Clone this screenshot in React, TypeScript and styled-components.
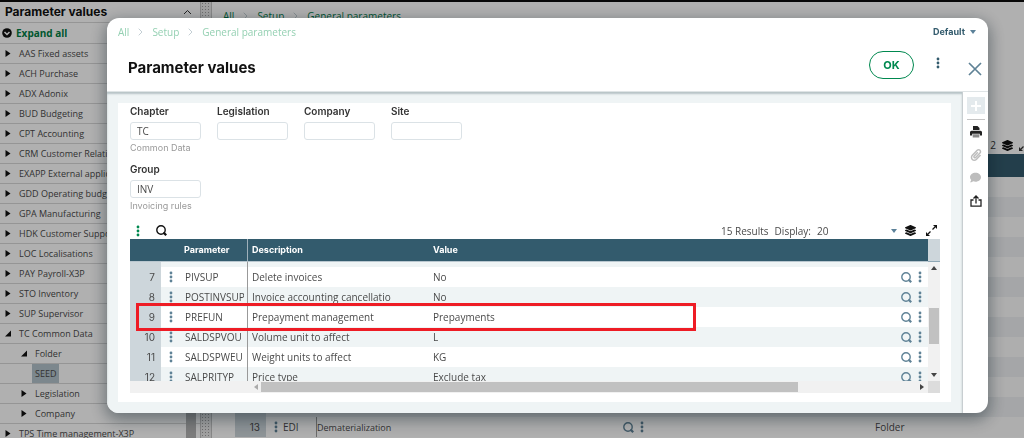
import React from "react";
import styled, { createGlobalStyle } from "styled-components";
import { FaLayerGroup, FaPrint, FaPaperclip, FaComment } from "react-icons/fa";

const ink = "#4a4a4a";
const slate = "#335b6d";
const body = `"Open Sans", "Noto Sans", sans-serif`;
const brand = `Inter, "Open Sans", sans-serif`;

const Global = createGlobalStyle`
  * { box-sizing: border-box; }
  body { margin: 0; overflow: hidden; font-family: ${body}; font-size: 10px; color: ${ink}; background: #fff; }
  button, input, select { font: inherit; color: inherit; margin: 0; padding: 0; border: 0; background: none; }
  button, select { cursor: pointer; }
  a { color: inherit; text-decoration: none; }
  h1, h2 { margin: 0; }
  svg { display: block; flex: none; }
`;

const Page = styled.div`
  display: flex;
  height: 100vh;
  border-top: 2px solid #0c0c0c;
  overflow: hidden;
`;

/* ---------- navigation tree ---------- */
const Sidebar = styled.aside`
  flex: none;
  width: 200px;
  overflow: hidden;
  font-size: 9px;
`;
const SideHeader = styled.div`
  display: flex;
  align-items: center;
  justify-content: space-between;
  height: 21px;
  padding: 0 8px 0 5px;
  border-bottom: 1px solid #d8d8d8;
`;
const SideTitle = styled.h2`
  font: 700 12px/20px ${brand};
  color: #111;
`;
const ExpandAll = styled.button`
  && {
    display: flex;
    align-items: center;
    gap: 4px;
    width: 100%;
    height: 21px;
    padding-left: 2px;
    border-bottom: 1px solid #d8d8d8;
    font-weight: 700;
    font-size: 10px;
    color: #007e45;
  }
`;
const TreeRow = styled.button<{ $depth: number }>`
  display: flex;
  align-items: center;
  gap: 8px;
  width: 100%;
  height: 20px;
  padding-left: ${(p) => 5 + p.$depth * 16}px;
  border-bottom: 1px solid #d8d8d8;
  line-height: 19px;
  white-space: nowrap;
`;
const Selected = styled.span`
  margin-left: -3px;
  padding: 0 3px;
  background: #b4c4cc;
`;
const SideScroll = styled.div`
  position: absolute;
  left: 186px;
  top: 24px;
  bottom: 0;
  width: 10px;
  background: #b4b4b4;
`;
const Splitter = styled.div`
  flex: none;
  width: 12px;
  border: solid #c4c4c4;
  border-width: 0 1px;
  background: radial-gradient(circle, #a0a0a0 1px, #eaeaea 1px) 0 0 / 3px 3px;
`;

/* ---------- page behind the dialog ---------- */
const Main = styled.main`
  flex: 1;
  min-width: 0;
`;
const Crumbs = styled.nav<{ $pale?: boolean }>`
  display: flex;
  align-items: center;
  gap: 9px;
  line-height: 16px;
  color: ${(p) => (p.$pale ? "#94d0b2" : "#00794a")};
`;
const MainTop = styled.div`
  height: 134px;
  padding: 6px 11px;
`;
const MainTools = styled.div`
  display: flex;
  align-items: center;
  justify-content: flex-end;
  gap: 6px;
  width: calc(100% + 6px);
  height: 18px;
  color: #333;
`;
const TableHolder = styled.div`
  padding-left: 23px;
`;
const Table = styled.table`
  width: 100%;
  table-layout: fixed;
  border-collapse: separate;
  border-spacing: 0;
  th, td { padding: 0; text-align: left; overflow: hidden; white-space: nowrap; }
`;
const BackHead = styled.th`
  height: 23px;
  background: ${slate};
`;
const BackRow = styled.tr<{ $alt: boolean }>`
  height: 20px;
  background: ${(p) => (p.$alt ? "#eff1f3" : "#fdfdfd")};
`;
const NoteCell = styled.td`
  font-size: 9px;
`;

/* ---------- dialog ---------- */
const Backdrop = styled.div`
  position: fixed;
  inset: 0;
  display: flex;
  padding: 18px 36px 25px 107px;
  background: rgba(0, 0, 0, 0.31);
`;
const Dialog = styled.section`
  display: flex;
  flex-direction: column;
  flex: 1;
  min-width: 0;
  overflow: hidden;
  border-radius: 12px;
  background: #fff;
  box-shadow: 0 5px 16px 2px rgba(0, 20, 30, 0.4);
`;
const DialogHeader = styled.header`
  display: flex;
  height: 74px;
  flex: none;
  border-bottom: 1px solid #dfe4e6;
`;
const HeaderLeft = styled.div`
  flex: 1;
  padding: 6px 0 0 11px;
`;
const DialogTitle = styled.h1`
  padding: 16px 0 0 10px;
  font: 700 15px/24px ${brand};
  color: #111;
`;
const HeaderRight = styled.div`
  display: flex;
  flex-direction: column;
  align-items: flex-end;
  padding: 6px 6px 0 0;
`;
const Picker = styled.span`
  display: flex;
  align-items: center;
  justify-content: space-between;
  position: relative;
`;
const ViewSelect = styled.select`
  appearance: none;
  width: 43px;
  height: 16px;
  margin-right: 6px;
  && { font: 700 9px/16px ${brand}; color: ${slate}; }
`;
const PickerArrow = styled.svg`
  position: absolute;
  right: 6px;
  width: 6px;
  height: 4px;
  fill: #5b8199;
  pointer-events: none;
`;
const Actions = styled.div`
  display: flex;
  align-items: flex-start;
  padding-top: 11px;
  color: ${slate};
`;
const OkButton = styled.button`
  && {
    width: 45px;
    height: 28px;
    border: 1px solid #00884f;
    border-radius: 14px;
    font: 700 11px/16px ${brand};
    color: #00884f;
  }
`;
const MenuButton = styled.button`
  && { display: flex; padding: 6px 22px; }
`;
const CloseButton = styled.button`
  && { display: flex; margin: 11px 0 0 6px; color: #5f8296; }
`;
const DialogBody = styled.div`
  display: flex;
  flex: 1;
  min-height: 0;
`;
const Canvas = styled.div`
  display: flex;
  flex: 1;
  min-width: 0;
  padding: 11px;
  background: #eff4f5;
  box-shadow: inset 0 2px 2px #b7c3c6;
`;
const Card = styled.div`
  display: flex;
  flex-direction: column;
  flex: 1;
  min-width: 0;
  padding: 1px 11px 9px 12px;
  background: #fff;
`;
const Rail = styled.div`
  display: flex;
  flex-direction: column;
  align-items: center;
  flex: none;
  width: 26px;
  padding-top: 5px;
  border-left: 1px solid #c8ced1;
  color: #222;
`;
const RailButton = styled.button<{ $off?: boolean }>`
  && {
    display: flex;
    align-items: center;
    justify-content: center;
    width: 18px;
    height: 23px;
    color: ${(p) => (p.$off ? "#bdbdbd" : "#222")};
  }
`;
const AddButton = styled.button`
  && {
    display: flex;
    align-items: center;
    justify-content: center;
    width: 18px;
    height: 17px;
    background: #e4eaed;
    color: #fff;
  }
`;
const RailRule = styled.div`
  width: 18px;
  height: 1px;
  margin: 5px 0 0;
  background: #c4c4c4;
`;

/* ---------- form ---------- */
const Fields = styled.div`
  display: flex;
  gap: 16px;
  flex: none;
  height: 58px;
`;
const Field = styled.div`
  width: 71px;
`;
const Label = styled.label`
  display: block;
  margin-bottom: 3px;
  font: 600 10px/15px ${brand};
  color: #333;
`;
const TextBox = styled.input`
  && {
    display: block;
    width: 71px;
    height: 18px;
    padding: 0 6px;
    border: 1px solid #dbe2e6;
    border-radius: 3px;
  }
`;
const Hint = styled.div`
  font: 400 9px/16px ${brand};
  color: #999;
  white-space: nowrap;
`;

/* ---------- grid ---------- */
const GridTools = styled.div`
  display: flex;
  align-items: center;
  flex: none;
  height: 17px;
  margin-top: 2px;
  color: #111;
`;
const GridMenu = styled.button`
  && { display: flex; width: 26px; padding-left: 6px; color: #00884f; }
`;
const Tool = styled.button`
  display: flex;
`;
const Paging = styled.label`
  display: flex;
  align-items: center;
  gap: 6px;
  margin-left: auto;
  color: ${ink};
`;
const SizeSelect = styled.select`
  appearance: none;
  width: 86px;
  height: 17px;
`;
const GridIcons = styled.div`
  display: flex;
  align-items: center;
  gap: 10px;
  padding: 0 3px 0 2px;
`;
const Grid = styled.div`
  position: relative;
  display: grid;
  grid-template-columns: minmax(0, 1fr) 12px;
  grid-template-rows: minmax(0, 1fr) 12px;
  flex: 1;
  min-height: 0;
`;
const Viewport = styled.div`
  overflow: hidden;
`;
const HeadCell = styled.th<{ $line?: boolean }>`
  && { padding-left: ${(p) => (p.$line ? 0 : 4)}px; }
  height: 23px;
  border-bottom: 1px solid #b9c7cf;
  ${(p) => p.$line && "border-right: 1px solid #9fb0ba;"}
  background: ${slate};
  font: 700 9px/16px ${brand};
  color: #fff;
`;
const Row = styled.tr<{ $alt?: boolean; $short?: boolean }>`
  height: ${(p) => (p.$short ? 5 : 20)}px;
  line-height: 20px;
  background: ${(p) => (p.$alt ? "#eff4f5" : "#fff")};
`;
const IndexCell = styled.td`
  && { padding-right: 6px; text-align: right; }
  background: #cdd6db;
  font-family: ${brand};
`;
const DotsCell = styled.td`
  && { padding-left: 8px; color: #5f8296; }
`;
const CodeCell = styled.td`
  && { padding-left: 1px; }
  border-right: 1px solid #999;
`;
const Clip = styled.div`
  width: 59px;
  overflow: hidden;
`;
const TextCell = styled.td`
  && { padding-left: 4px; }
`;
const RowIcons = styled.div`
  display: flex;
  align-items: center;
  gap: 6px;
  color: #5f8296;
`;
const VBar = styled.div`
  display: flex;
  flex-direction: column;
  align-items: center;
  background: #f1f1f1;
`;
const VHead = styled.div`
  flex: none;
  width: 100%;
  height: 23px;
  background: #cdd6db;
  border-bottom: 1px solid #8fa8b5;
`;
const Thumb = styled.div<{ $across?: boolean }>`
  background: #c1c1c1;
  ${(p) => (p.$across ? "flex: 540; height: 10px;" : "width: 10px; height: 36px; margin: 30px 0 auto;")}
`;
const HBar = styled.div`
  display: flex;
  align-items: center;
  padding-right: 4px;
  background: #f1f1f1;
`;
const HLead = styled.div`
  flex: none;
  width: 131px;
  padding-left: 124px;
`;
const HRest = styled.div`
  display: flex;
  flex: 127;
  justify-content: flex-end;
`;
const Corner = styled.div`
  background: #dcdcdc;
`;
const Highlight = styled.div`
  position: absolute;
  left: 6px;
  right: 244px;
  top: 64px;
  height: 28px;
  border: 3px solid #ee1c25;
  pointer-events: none;
`;

/* ---------- drawings ---------- */
const Dots = () => (
  <svg width="4" height="12" viewBox="0 0 4 12" fill="currentColor">
    <circle cx="2" cy="2" r="1.4" />
    <circle cx="2" cy="6" r="1.4" />
    <circle cx="2" cy="10" r="1.4" />
  </svg>
);
const Search = () => (
  <svg width="11" height="11" viewBox="0 0 11 11" fill="none" stroke="currentColor">
    <circle cx="5" cy="5" r="4.2" strokeWidth="1.4" />
    <path d="M7.4 7.400 10.2 10.2" strokeWidth="2.2" />
  </svg>
);
const Chevron = () => (
  <svg width="5" height="8" viewBox="0 0 5 8" fill="none" stroke="#c4cfd4">
    <path d="M.7.7 4 4 .7 7.3" />
  </svg>
);
const Expand = () => (
  <svg width="11" height="11" viewBox="0 0 11 11" fill="currentColor" stroke="currentColor">
    <path d="M6.5 4.5 9 2M4.5 6.5 2 9" strokeWidth="1.3" />
    <path d="M7 0H11V4ZM0 7V11H4Z" stroke="none" />
  </svg>
);
const Tri = ({ open }: { open?: boolean }) => (
  <svg width="6" height="7" viewBox="0 0 6 7" fill="#111">
    <path d={open ? "M6 0.500V6.500H0Z" : "M0.500 0 5.500 3.500 0.500 7Z"} />
  </svg>
);

const tree: { name: string; depth?: number; open?: boolean; picked?: boolean }[] = [
  { name: "AAS Fixed assets" },
  { name: "ACH Purchase" },
  { name: "ADX Adonix" },
  { name: "BUD Budgeting" },
  { name: "CPT Accounting" },
  { name: "CRM Customer Relation" },
  { name: "EXAPP External applic" },
  { name: "GDD Operating budge" },
  { name: "GPA Manufacturing" },
  { name: "HDK Customer Suppo" },
  { name: "LOC Localisations" },
  { name: "PAY Payroll-X3P" },
  { name: "STO Inventory" },
  { name: "SUP Supervisor" },
  { name: "TC Common Data", open: true },
  { name: "Folder", depth: 1, open: true },
  { name: "SEED", depth: 1, picked: true },
  { name: "Legislation", depth: 1 },
  { name: "Company", depth: 1 },
  { name: "TPS Time management-X3P" },
];

const rows = [
  [7, "PIVSUP", "Delete invoices", "No"],
  [8, "POSTINVSUP", "Invoice accounting cancellatio", "No"],
  [9, "PREFUN", "Prepayment management", "Prepayments"],
  [10, "SALDSPVOU", "Volume unit to affect", "L"],
  [11, "SALDSPWEU", "Weight units to affect", "KG"],
  [12, "SALPRITYP", "Price type", "Exclude tax"],
] as const;

const CrumbTrail = ({ pale }: { pale?: boolean }) => (
  <Crumbs $pale={pale} aria-label="Breadcrumb">
    <a href="#all">All</a>
    <Chevron />
    <a href="#setup">Setup</a>
    <Chevron />
    <a href="#general">General parameters</a>
  </Crumbs>
);

const FormField = ({ id, label, value = "", hint }: { id: string; label: string; value?: string; hint?: string }) => (
  <Field>
    <Label htmlFor={id}>{label}</Label>
    <TextBox id={id} defaultValue={value} />
    {hint && <Hint>{hint}</Hint>}
  </Field>
);

export default function App() {
  return (
    <>
      <Global />
      <Page>
        <Sidebar>
          <SideHeader>
            <SideTitle>Parameter values</SideTitle>
            <svg width="9" height="6" viewBox="0 0 9 6" fill="none" stroke="#333">
              <path d="M1 5 4.500 1.500 8 5" />
            </svg>
          </SideHeader>
          <ExpandAll>
            <svg width="10" height="10" viewBox="0 0 10 10">
              <circle cx="5" cy="5" r="4.800" fill="#111" />
              <path d="M2.500 4 5 6.500 7.500 4" fill="none" stroke="#fff" strokeWidth="1.500" />
            </svg>
            Expand all
          </ExpandAll>
          {tree.map((n) => (
            <TreeRow key={n.name} $depth={n.depth ?? 0}>
              {n.picked ? (
                <>
                  <svg width="6" height="8" />
                  <Selected>{n.name}</Selected>
                </>
              ) : (
                <>
                  <Tri open={n.open} />
                  {n.name}
                </>
              )}
            </TreeRow>
          ))}
          <SideScroll />
        </Sidebar>
        <Splitter />
        <Main>
          <MainTop>
            <CrumbTrail />
          </MainTop>
          <MainTools>
            2 <FaLayerGroup size={11} color="#111" /> <Expand />
          </MainTools>
          <TableHolder>
            <Table>
              <colgroup>
                <col style={{ width: 31 }} />
                <col style={{ width: 16 }} />
                <col style={{ width: 35 }} />
                <col style={{ width: 306 }} />
                <col style={{ width: 252 }} />
                <col />
              </colgroup>
              <thead>
                <tr>
                  <BackHead colSpan={6} />
                </tr>
              </thead>
              <tbody>
                {Array.from({ length: 12 }, (_, i) => (
                  <BackRow key={i} $alt={i % 2 === 1}>
                    <IndexCell />
                    <td colSpan={5} />
                  </BackRow>
                ))}
                <BackRow $alt={false}>
                  <IndexCell>13</IndexCell>
                  <DotsCell>
                    <Dots />
                  </DotsCell>
                  <CodeCell>EDI</CodeCell>
                  <NoteCell>Dematerialization</NoteCell>
                  <td>
                    <RowIcons>
                      <Search />
                      <Dots />
                    </RowIcons>
                  </td>
                  <td>Folder</td>
                </BackRow>
              </tbody>
            </Table>
          </TableHolder>
        </Main>
      </Page>

      <Backdrop>
        <Dialog role="dialog" aria-label="Parameter values">
          <DialogHeader>
            <HeaderLeft>
              <CrumbTrail pale />
              <DialogTitle>Parameter values</DialogTitle>
            </HeaderLeft>
            <HeaderRight>
              <Picker>
                <ViewSelect aria-label="View">
                  <option>Default</option>
                </ViewSelect>
                <PickerArrow viewBox="0 0 6 4">
                  <path d="M0 0H6L3 4Z" />
                </PickerArrow>
              </Picker>
              <Actions>
                <OkButton>OK</OkButton>
                <MenuButton aria-label="More actions">
                  <Dots />
                </MenuButton>
                <CloseButton aria-label="Close">
                  <svg width="14" height="14" viewBox="0 0 14 14" stroke="currentColor" strokeWidth="1.700">
                    <path d="M1 1 13 13M13 1 1 13" />
                  </svg>
                </CloseButton>
              </Actions>
            </HeaderRight>
          </DialogHeader>
          <DialogBody>
            <Canvas>
              <Card>
                <Fields>
                  <FormField id="chapter" label="Chapter" value="TC" hint="Common Data" />
                  <FormField id="legislation" label="Legislation" />
                  <FormField id="company" label="Company" />
                  <FormField id="site" label="Site" />
                </Fields>
                <Fields>
                  <FormField id="group" label="Group" value="INV" hint="Invoicing rules" />
                </Fields>
                <GridTools>
                  <GridMenu aria-label="Grid menu">
                    <Dots />
                  </GridMenu>
                  <Tool aria-label="Search">
                    <Search />
                  </Tool>
                  <Paging>
                    <span>15 Results</span>
                    <span>Display:</span>
                    <Picker>
                      <SizeSelect>
                        <option>20</option>
                      </SizeSelect>
                      <PickerArrow viewBox="0 0 6 4">
                        <path d="M0 0H6L3 4Z" />
                      </PickerArrow>
                    </Picker>
                  </Paging>
                  <GridIcons>
                    <Tool aria-label="Layers">
                      <FaLayerGroup size={11} />
                    </Tool>
                    <Tool aria-label="Full screen">
                      <Expand />
                    </Tool>
                  </GridIcons>
                </GridTools>
                <Grid>
                  <Viewport>
                    <Table>
                      <colgroup>
                        <col style={{ width: 31 }} />
                        <col style={{ width: 23 }} />
                        <col style={{ width: 64 }} />
                        <col style={{ width: 181 }} />
                        <col />
                        <col style={{ width: 27 }} />
                      </colgroup>
                      <thead>
                        <tr>
                          <HeadCell />
                          <HeadCell />
                          <HeadCell $line>Parameter</HeadCell>
                          <HeadCell>Description</HeadCell>
                          <HeadCell>Value</HeadCell>
                          <HeadCell />
                        </tr>
                      </thead>
                      <tbody>
                        <Row $short $alt>
                          <IndexCell />
                          <td />
                          <CodeCell />
                          <td colSpan={3} />
                        </Row>
                        {rows.map(([no, code, text, value], i) => (
                          <Row key={no} $alt={i % 2 === 1}>
                            <IndexCell>{no}</IndexCell>
                            <DotsCell>
                              <Dots />
                            </DotsCell>
                            <CodeCell>
                              <Clip>{code}</Clip>
                            </CodeCell>
                            <TextCell>{text}</TextCell>
                            <TextCell>{value}</TextCell>
                            <td>
                              <RowIcons>
                                <Search />
                                <Dots />
                              </RowIcons>
                            </td>
                          </Row>
                        ))}
                      </tbody>
                    </Table>
                  </Viewport>
                  <VBar>
                    <VHead />
                    <svg width="6" height="16" viewBox="0 0 6 16" fill="#444">
                      <path d="M0 8 3 4 6 8Z" />
                    </svg>
                    <Thumb />
                    <svg width="6" height="10" viewBox="0 0 6 10" fill="#444">
                      <path d="M0 2H6L3 6Z" />
                    </svg>
                  </VBar>
                  <HBar>
                    <HLead>
                      <svg width="4" height="6" viewBox="0 0 4 6" fill="#aaa">
                        <path d="M4 0V6L0 3Z" />
                      </svg>
                    </HLead>
                    <Thumb $across />
                    <HRest>
                      <svg width="4" height="6" viewBox="0 0 4 6" fill="#444">
                        <path d="M0 0V6L4 3Z" />
                      </svg>
                    </HRest>
                  </HBar>
                  <Corner />
                  <Highlight />
                </Grid>
              </Card>
            </Canvas>
            <Rail>
              <AddButton aria-label="Add">
                <svg width="12" height="12" viewBox="0 0 12 12" stroke="currentColor" strokeWidth="2">
                  <path d="M6 1V11M1 6H11" />
                </svg>
              </AddButton>
              <RailRule />
              <RailButton aria-label="Print">
                <svg width="12" height="12" viewBox="0 0 12 12" fill="currentColor">
                  <path d="M3 0H7.500L9.500 2V4H3Z" />
                  <path d="M1.500 4.800H10.500Q12 4.800 12 6.300V9.500H9.800V7.800H2.200V9.500H0V6.300Q0 4.800 1.500 4.800Z" />
                  <path d="M2.700 8.300H9.300V11.500H2.700Z" fill="#8a8a8a" />
                </svg>
              </RailButton>
              <RailButton $off aria-label="Attachments">
                <FaPaperclip size={12} />
              </RailButton>
              <RailButton $off aria-label="Comments">
                <FaComment size={11} />
              </RailButton>
              <RailButton aria-label="Share">
                <svg width="12" height="12" viewBox="0 0 12 12" fill="none" stroke="currentColor" strokeWidth="1.300">
                  <path d="M3.500 5H1V11.200H11V5H8.500M6 8.500V1M3.500 3.500 6 1 8.500 3.500" />
                </svg>
              </RailButton>
            </Rail>
          </DialogBody>
        </Dialog>
      </Backdrop>
    </>
  );
}
